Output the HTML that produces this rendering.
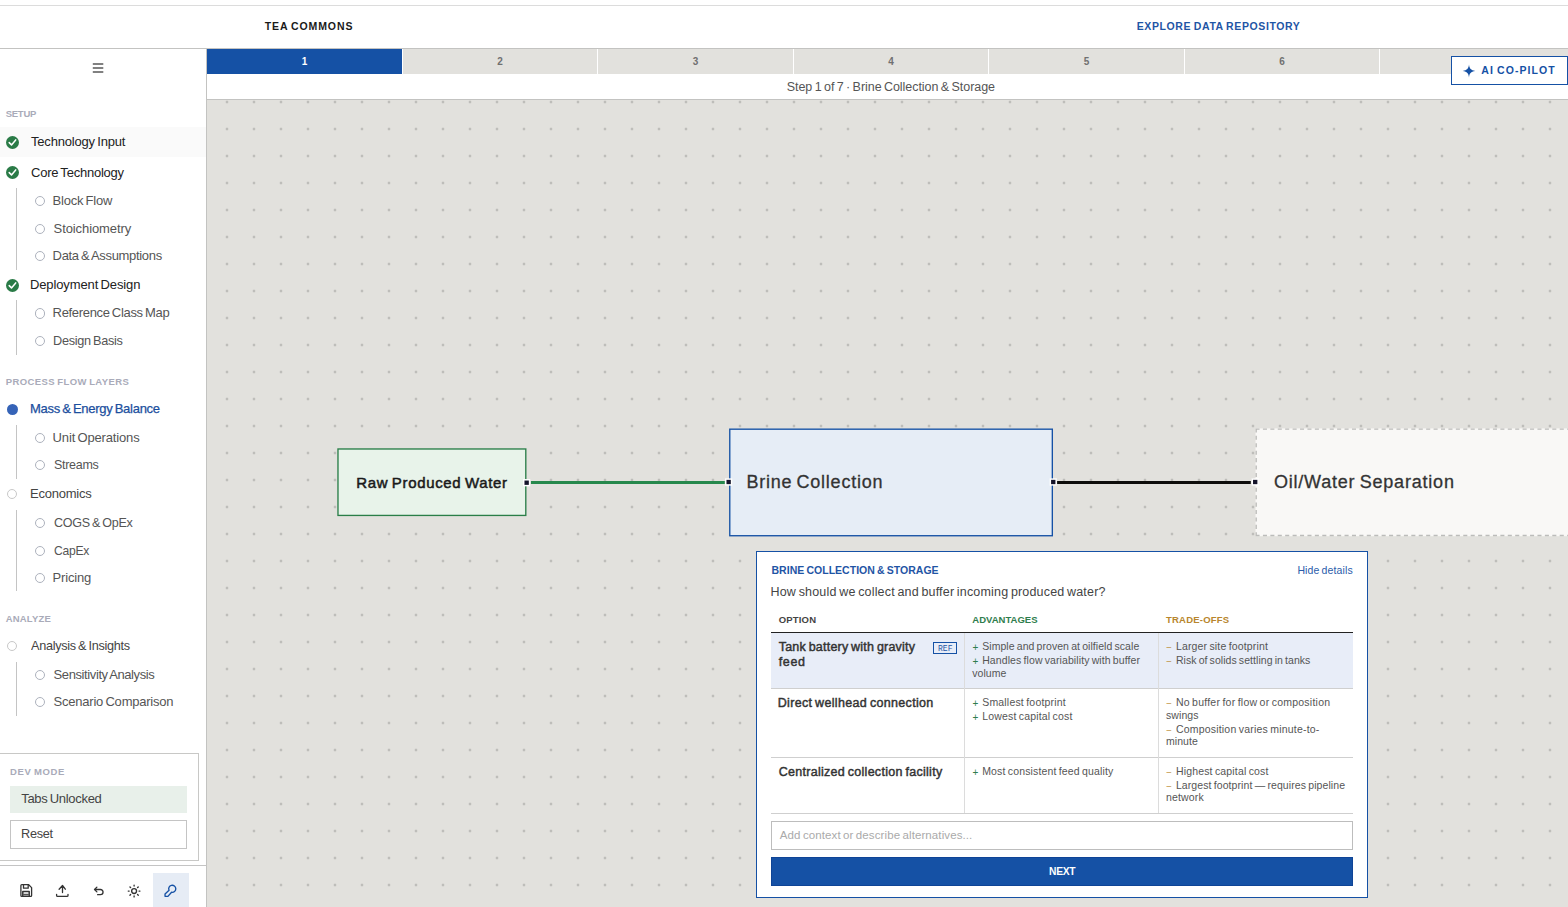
<!DOCTYPE html>
<html lang="en">
<head>
<meta charset="utf-8">
<title>TEA Commons</title>
<style>
*{box-sizing:border-box;margin:0;padding:0}
html,body{width:1568px;height:907px;overflow:hidden;background:#fff;font-family:"Liberation Sans",sans-serif}
.a{position:absolute}
.t{position:absolute;white-space:nowrap}
.ring{border:1px solid #b4b8c2;border-radius:50%;background:#fff}
#topline{left:0;top:5px;width:1568px;height:1px;background:#dcdcdc}
#hdrline{left:0;top:48px;width:1568px;height:1px;background:#c3c3c1}
#sidebar{left:0;top:49px;width:206px;height:858px;background:#fff}
#sideborder{left:206px;top:49px;width:1px;height:858px;background:#c3c3c1}
#rowhl{left:0;top:127px;width:206px;height:30px;background:#fafafa}
.tab{position:absolute;top:49px;height:25px;background:#e2e1dd;color:#707070;font:700 10px/25px "Liberation Sans",sans-serif;text-align:center}
.tab.on{background:#1551a5;color:#fff}
#strip{left:207px;top:74px;width:1361px;height:25px;background:#fff}
#stripline{left:207px;top:99px;width:1361px;height:1px;background:#c3c3c1}
#canvas{left:207px;top:100px;width:1361px;height:807px;background:#e2e1dd;overflow:hidden}
#copilot{left:1451px;top:56px;width:117px;height:29px;border:1px solid #1551a5;background:#fff}
.node{position:absolute}
#n1{left:337px;top:448px;width:190px;height:68px;border:1.35px solid #2f8a57;background:#e8f3ea}
#n2{left:729px;top:428.5px;width:324px;height:108px;border:1.35px solid #2a5caa;background:#e8edf6}
#n3{left:1256px;top:428.5px;width:324px;height:108px;border:1.35px dashed #c4c4c2;background:#f9f8f6}
.h{position:absolute;width:7px;height:7px;background:#1a192b;border:1px solid #fff}
#panel{left:756px;top:551px;width:612px;height:347px;border:1px solid #1551a5;background:#fff}
#devbox{left:-1px;top:753px;width:200px;height:108px;border:1px solid #c8c8c6}
#tabsun{left:10px;top:786px;width:177px;height:27px;background:#e8f0ea}
#reset{left:10px;top:820px;width:177px;height:29px;border:1px solid #c4c4c4;background:#fff}
#sideline{left:0;top:865px;width:206px;height:1px;background:#c4c4c4}
#keybg{left:153px;top:873px;width:36px;height:34px;background:#e6ecf5}
#thead{left:771px;top:632px;width:582px;height:1px;background:#222}
#row1{left:771px;top:633px;width:582px;height:55px;background:#e8edf8}
.hl{position:absolute;left:771px;width:582px;height:1px;background:#cfcfcf}
.vl{position:absolute;top:633px;width:1px;height:180px;background:#dcdcdc}
#ref{left:933px;top:642px;width:24px;height:12px;border:1px solid #1551a5}
#input{left:771px;top:821px;width:582px;height:29px;border:1px solid #bdbdbd;background:#fff}
#next{left:771px;top:857px;width:582px;height:29px;background:#1551a5;border:1px solid #0f4496}
</style>
</head>
<body>
<div class="a" id="topline"></div>
<div class="a" id="hdrline"></div>
<div class="a" id="sidebar"></div>
<div class="a" id="rowhl"></div>
<div class="a" id="sideborder"></div>
<div class="tab on" style="left:207px;width:195px">1</div>
<div class="tab" style="left:403px;width:194px">2</div>
<div class="tab" style="left:598px;width:195px">3</div>
<div class="tab" style="left:794px;width:194px">4</div>
<div class="tab" style="left:989px;width:195px">5</div>
<div class="tab" style="left:1185px;width:194px">6</div>
<div class="tab" style="left:1380px;width:195px">7</div>
<div class="a" id="strip"></div>
<div class="a" id="stripline"></div>
<div class="a" id="canvas">
<svg class="a" style="left:0;top:0" width="1361" height="807">
<defs><pattern id="dots" x="6.5" y="-11.5" width="27" height="27" patternUnits="userSpaceOnUse"><circle cx="13.5" cy="13.5" r="0.9" fill="#91918e"/></pattern></defs>
<rect width="1361" height="807" fill="url(#dots)"/>
</svg>
</div>
<!-- edges + nodes -->
<svg class="a" style="left:207px;top:100px" width="1361" height="807" viewBox="207 100 1361 807">
<line x1="530.9" y1="482.5" x2="724.8" y2="482.5" stroke="#26884c" stroke-width="3"/>
<line x1="1057.1" y1="482.45" x2="1250.8" y2="482.45" stroke="#0d0d0b" stroke-width="3.1"/>
<rect x="337.98" y="448.98" width="187.82" height="66.45" fill="#e8f3ea" stroke="#2a7e48" stroke-width="1.35"/>
<rect x="729.78" y="429.18" width="322.55" height="106.55" fill="#e6edf6" stroke="#1551a5" stroke-width="1.35"/>
<rect x="1255.5" y="428.4" width="324" height="107.8" fill="#f9f8f6"/>
<path d="M1255.5 429.1H1580M1256.2 428.4V536.2M1255.5 535.5H1580" fill="none" stroke="#bcbcba" stroke-width="1.35" stroke-dasharray="4.05 3.37"/>
<g fill="#14132a" stroke="#fff" stroke-width="1.45">
<rect x="523.75" y="479.8" width="5.8" height="5.8"/>
<rect x="725.75" y="479.1" width="5.8" height="5.8"/>
<rect x="1050.35" y="479.1" width="5.8" height="5.8"/>
<rect x="1252.3" y="479.1" width="5.8" height="5.8"/>
</g>
</svg>
<!-- panel -->
<div class="a" id="panel"></div>
<div class="a" id="row1"></div>
<div class="a" id="thead"></div>
<div class="hl" style="top:688px"></div>
<div class="hl" style="top:757px"></div>
<div class="hl" style="top:813px"></div>
<div class="vl" style="left:964px"></div>
<div class="vl" style="left:1158px"></div>
<div class="a" id="ref"></div>
<div class="a" id="input"></div>
<div class="a" id="next"></div>
<!-- co-pilot -->
<div class="a" id="copilot"></div>
<svg class="a" style="left:1462.4px;top:64px" width="14" height="14" viewBox="0 0 13 13"><path d="M6.5 0.5 C6.9 4.3 8.2 5.7 12.3 6.5 C8.2 7.3 6.9 8.7 6.5 12.5 C6.1 8.7 4.8 7.3 0.7 6.5 C4.8 5.7 6.1 4.3 6.5 0.5Z" fill="#1551a5"/></svg>
<!-- sidebar widgets -->
<svg class="a" style="left:92px;top:62px" width="13" height="13" viewBox="0 0 13 13"><path d="M0.8 2h10.5M0.8 6h10.5M0.8 10.05h10.5" stroke="#585858" stroke-width="1.5" fill="none"/></svg>
<div class="a" id="devbox"></div>
<div class="a" id="tabsun"></div>
<div class="a" id="reset"></div>
<div class="a" id="sideline"></div>
<div class="a" id="keybg"></div>
<svg class="a" style="left:5.8px;top:135.7px" width="13" height="13" viewBox="0 0 13 13"><circle cx="6.5" cy="6.5" r="6.5" fill="#2a7b47"/><path d="M3.2 6.6 L5.5 8.9 L9.7 3.9" fill="none" stroke="#fff" stroke-width="1.5" stroke-linecap="round" stroke-linejoin="round"/></svg>
<svg class="a" style="left:5.8px;top:166.0px" width="13" height="13" viewBox="0 0 13 13"><circle cx="6.5" cy="6.5" r="6.5" fill="#2a7b47"/><path d="M3.2 6.6 L5.5 8.9 L9.7 3.9" fill="none" stroke="#fff" stroke-width="1.5" stroke-linecap="round" stroke-linejoin="round"/></svg>
<svg class="a" style="left:5.8px;top:278.5px" width="13" height="13" viewBox="0 0 13 13"><circle cx="6.5" cy="6.5" r="6.5" fill="#2a7b47"/><path d="M3.2 6.6 L5.5 8.9 L9.7 3.9" fill="none" stroke="#fff" stroke-width="1.5" stroke-linecap="round" stroke-linejoin="round"/></svg>
<div class="a ring" style="left:35.15px;top:195.85px;width:10.3px;height:10.3px;border-color:#adb2bd"></div>
<div class="a ring" style="left:35.15px;top:223.55px;width:10.3px;height:10.3px;border-color:#adb2bd"></div>
<div class="a ring" style="left:35.15px;top:250.85px;width:10.3px;height:10.3px;border-color:#adb2bd"></div>
<div class="a ring" style="left:35.15px;top:308.35px;width:10.3px;height:10.3px;border-color:#adb2bd"></div>
<div class="a ring" style="left:35.15px;top:336.05px;width:10.3px;height:10.3px;border-color:#adb2bd"></div>
<div class="a ring" style="left:35.15px;top:432.85px;width:10.3px;height:10.3px;border-color:#adb2bd"></div>
<div class="a ring" style="left:35.15px;top:459.95px;width:10.3px;height:10.3px;border-color:#adb2bd"></div>
<div class="a ring" style="left:35.15px;top:517.75px;width:10.3px;height:10.3px;border-color:#adb2bd"></div>
<div class="a ring" style="left:35.15px;top:545.55px;width:10.3px;height:10.3px;border-color:#adb2bd"></div>
<div class="a ring" style="left:35.15px;top:572.75px;width:10.3px;height:10.3px;border-color:#adb2bd"></div>
<div class="a ring" style="left:35.15px;top:669.85px;width:10.3px;height:10.3px;border-color:#adb2bd"></div>
<div class="a ring" style="left:35.15px;top:696.85px;width:10.3px;height:10.3px;border-color:#adb2bd"></div>
<div class="a ring" style="left:7.05px;top:488.85px;width:10.3px;height:10.3px;border-color:#c8c8c8"></div>
<div class="a ring" style="left:7.05px;top:640.85px;width:10.3px;height:10.3px;border-color:#c8c8c8"></div>
<div class="a" style="left:6.8px;top:403.5px;width:11px;height:11px;border-radius:50%;background:#3563b7"></div>
<div class="a" style="left:16px;top:188.0px;width:1px;height:81.6px;background:#c4c4c4"></div>
<div class="a" style="left:16px;top:300.0px;width:1px;height:54.7px;background:#c4c4c4"></div>
<div class="a" style="left:16px;top:425.0px;width:1px;height:53.6px;background:#c4c4c4"></div>
<div class="a" style="left:16px;top:510.2px;width:1px;height:80.6px;background:#c4c4c4"></div>
<div class="a" style="left:16px;top:662.3px;width:1px;height:53.6px;background:#c4c4c4"></div>
<!-- bottom icons -->
<svg class="a" style="left:0;top:870px" width="206" height="37" viewBox="0 870 206 37" fill="none" stroke="#333" stroke-width="1.3" stroke-linecap="round" stroke-linejoin="round">
<!-- save -->
<path d="M20.9 885.6Q20.9 884.7 21.8 884.7H28.7L31.6 887.6V895.5Q31.6 896.4 30.7 896.4H21.8Q20.9 896.4 20.9 895.5Z"/>
<path d="M23.5 884.9V888.2H28.2V884.9"/>
<path d="M22.8 896.2V891.6H29.2V896.2" stroke-width="1.5"/>
<path d="M23.6 894.6H28.4" stroke-width="1.6" stroke="#555"/>
<!-- upload -->
<path d="M56.6 894.3V895.4Q56.6 896.35 57.6 896.35H67Q68 896.35 68 895.4V894.3"/>
<path d="M62.5 885.6V892.6M59.1 889.2L62.5 885.5L65.3 889.2"/>
<!-- undo -->
<path d="M96.9 887.1L94.5 889.5L96.9 891.9M94.6 889.5H100.45A2.6 2.6 0 0 1 100.45 894.7H97.6"/>
<!-- sun -->
<circle cx="134.1" cy="891.05" r="2.45" stroke-width="1.35"/>
<path d="M134.1 885.2v0.9M134.1 896v0.9M128.25 891.05h0.9M139.05 891.05h0.9M129.95 886.9l0.65 0.65M137.6 894.55l0.65 0.65M129.95 895.2l0.65-0.65M137.6 887.55l0.65-0.65" stroke-width="1.35"/>
<!-- key -->
<path d="M169.06 890.36L165.05 894.1V896.35H167.9L171.57 892.28A3.55 3.55 0 1 0 169.06 890.36Z" stroke="#1551a5" stroke-width="1.35"/>
</svg>
<div class="t" style="left:264.70px;top:20px;font:700 10.5px/12px 'Liberation Sans',sans-serif;color:#1a1a1a;letter-spacing:0.903px;word-spacing:-0.84px;">TEA COMMONS</div>
<div class="t" style="left:1136.70px;top:20px;font:700 10.5px/12px 'Liberation Sans',sans-serif;color:#1f55a5;letter-spacing:0.605px;word-spacing:-0.84px;">EXPLORE DATA REPOSITORY</div>
<div class="t" style="left:786.70px;top:80px;font:400 12.5px/14px 'Liberation Sans',sans-serif;color:#555;letter-spacing:-0.047px;word-spacing:-1.00px;">Step 1 of 7 · Brine Collection &amp; Storage</div>
<div class="t" style="left:1481.30px;top:64px;font:700 10.5px/12px 'Liberation Sans',sans-serif;color:#1551a5;letter-spacing:1.057px;word-spacing:-0.84px;">AI CO-PILOT</div>
<div class="t" style="left:5.70px;top:108px;font:700 9.5px/11px 'Liberation Sans',sans-serif;color:#a9abb9;letter-spacing:-0.259px;word-spacing:0.00px;">SETUP</div>
<div class="t" style="left:31.00px;top:134px;font:400 13px/15px 'Liberation Sans',sans-serif;color:#222;letter-spacing:-0.189px;word-spacing:-1.04px;">Technology Input</div>
<div class="t" style="left:31.00px;top:165px;font:400 13px/15px 'Liberation Sans',sans-serif;color:#222;letter-spacing:-0.230px;word-spacing:-1.04px;">Core Technology</div>
<div class="t" style="left:52.60px;top:193px;font:400 13px/15px 'Liberation Sans',sans-serif;color:#555;letter-spacing:-0.224px;word-spacing:-1.04px;">Block Flow</div>
<div class="t" style="left:53.60px;top:221px;font:400 13px/15px 'Liberation Sans',sans-serif;color:#555;letter-spacing:-0.096px;word-spacing:0.00px;">Stoichiometry</div>
<div class="t" style="left:52.60px;top:248px;font:400 13px/15px 'Liberation Sans',sans-serif;color:#555;letter-spacing:-0.317px;word-spacing:-1.04px;">Data &amp; Assumptions</div>
<div class="t" style="left:30.00px;top:277px;font:400 13px/15px 'Liberation Sans',sans-serif;color:#222;letter-spacing:-0.123px;word-spacing:-1.04px;">Deployment Design</div>
<div class="t" style="left:52.60px;top:305px;font:400 13px/15px 'Liberation Sans',sans-serif;color:#555;letter-spacing:-0.327px;word-spacing:-1.04px;">Reference Class Map</div>
<div class="t" style="left:52.62px;top:333px;font:400 13px/15px 'Liberation Sans',sans-serif;color:#555;letter-spacing:-0.300px;word-spacing:-1.04px;transform:scaleX(0.9771);transform-origin:0 0;">Design Basis</div>
<div class="t" style="left:5.70px;top:376px;font:700 9.5px/11px 'Liberation Sans',sans-serif;color:#a9abb9;letter-spacing:0.405px;word-spacing:-0.76px;">PROCESS FLOW LAYERS</div>
<div class="t" style="left:30.00px;top:401px;font:400 13px/15px 'Liberation Sans',sans-serif;color:#1c4f9e;letter-spacing:-0.279px;word-spacing:-1.04px;-webkit-text-stroke:0.25px #1c4f9e;">Mass &amp; Energy Balance</div>
<div class="t" style="left:52.60px;top:430px;font:400 13px/15px 'Liberation Sans',sans-serif;color:#555;letter-spacing:-0.156px;word-spacing:-1.04px;">Unit Operations</div>
<div class="t" style="left:53.60px;top:457px;font:400 13px/15px 'Liberation Sans',sans-serif;color:#555;letter-spacing:-0.300px;word-spacing:0.00px;transform:scaleX(0.9596);transform-origin:0 0;">Streams</div>
<div class="t" style="left:30.00px;top:486px;font:400 13px/15px 'Liberation Sans',sans-serif;color:#444;letter-spacing:-0.222px;word-spacing:0.00px;">Economics</div>
<div class="t" style="left:53.60px;top:515px;font:400 13px/15px 'Liberation Sans',sans-serif;color:#555;letter-spacing:-0.300px;word-spacing:-1.04px;transform:scaleX(0.9646);transform-origin:0 0;">COGS &amp; OpEx</div>
<div class="t" style="left:53.60px;top:543px;font:400 13px/15px 'Liberation Sans',sans-serif;color:#555;letter-spacing:-0.300px;word-spacing:0.00px;transform:scaleX(0.9317);transform-origin:0 0;">CapEx</div>
<div class="t" style="left:52.60px;top:570px;font:400 13px/15px 'Liberation Sans',sans-serif;color:#555;letter-spacing:-0.168px;word-spacing:0.00px;">Pricing</div>
<div class="t" style="left:5.70px;top:613px;font:700 9.5px/11px 'Liberation Sans',sans-serif;color:#a9abb9;letter-spacing:0.191px;word-spacing:0.00px;">ANALYZE</div>
<div class="t" style="left:31.00px;top:638px;font:400 13px/15px 'Liberation Sans',sans-serif;color:#444;letter-spacing:-0.300px;word-spacing:-1.04px;transform:scaleX(0.9743);transform-origin:0 0;">Analysis &amp; Insights</div>
<div class="t" style="left:53.60px;top:667px;font:400 13px/15px 'Liberation Sans',sans-serif;color:#555;letter-spacing:-0.400px;word-spacing:-1.04px;">Sensitivity Analysis</div>
<div class="t" style="left:53.60px;top:694px;font:400 13px/15px 'Liberation Sans',sans-serif;color:#555;letter-spacing:-0.224px;word-spacing:-1.04px;">Scenario Comparison</div>
<div class="t" style="left:10.10px;top:766px;font:700 9.5px/11px 'Liberation Sans',sans-serif;color:#a9abb9;letter-spacing:0.618px;word-spacing:-0.76px;">DEV MODE</div>
<div class="t" style="left:21.20px;top:791px;font:400 13px/15px 'Liberation Sans',sans-serif;color:#444;letter-spacing:-0.300px;word-spacing:-1.04px;">Tabs Unlocked</div>
<div class="t" style="left:21.02px;top:826px;font:400 13px/15px 'Liberation Sans',sans-serif;color:#444;letter-spacing:-0.300px;word-spacing:0.00px;transform:scaleX(0.9767);transform-origin:0 0;">Reset</div>
<div class="t" style="left:356.20px;top:474px;font:400 15px/17px 'Liberation Sans',sans-serif;color:#1a1a1a;letter-spacing:0.664px;word-spacing:-1.20px;-webkit-text-stroke:0.5px #1a1a1a;">Raw Produced Water</div>
<div class="t" style="left:746.50px;top:472px;font:400 18px/20px 'Liberation Sans',sans-serif;color:#333;letter-spacing:0.753px;word-spacing:-1.44px;-webkit-text-stroke:0.3px #333;">Brine Collection</div>
<div class="t" style="left:1273.90px;top:472px;font:400 18px/20px 'Liberation Sans',sans-serif;color:#333;letter-spacing:0.792px;word-spacing:-1.44px;-webkit-text-stroke:0.3px #333;">Oil/Water Separation</div>
<div class="t" style="left:771.50px;top:564px;font:700 10.5px/12px 'Liberation Sans',sans-serif;color:#1f55a5;letter-spacing:0.026px;word-spacing:-0.84px;">BRINE COLLECTION &amp; STORAGE</div>
<div class="t" style="left:1297.40px;top:564px;font:400 10.5px/12px 'Liberation Sans',sans-serif;color:#2a5caa;letter-spacing:0.111px;word-spacing:-0.84px;">Hide details</div>
<div class="t" style="left:770.50px;top:585px;font:400 12.5px/14px 'Liberation Sans',sans-serif;color:#444;letter-spacing:0.172px;word-spacing:-1.00px;">How should we collect and buffer incoming produced water?</div>
<div class="t" style="left:778.70px;top:614px;font:700 9.5px/11px 'Liberation Sans',sans-serif;color:#444;letter-spacing:0.188px;word-spacing:0.00px;">OPTION</div>
<div class="t" style="left:972.30px;top:614px;font:700 9.5px/11px 'Liberation Sans',sans-serif;color:#2f7d4d;letter-spacing:0.016px;word-spacing:0.00px;">ADVANTAGES</div>
<div class="t" style="left:1166.00px;top:614px;font:700 9.5px/11px 'Liberation Sans',sans-serif;color:#b8862d;letter-spacing:0.213px;word-spacing:0.00px;">TRADE-OFFS</div>
<div class="t" style="left:1048.60px;top:865px;font:700 10.5px/12px 'Liberation Sans',sans-serif;color:#fff;letter-spacing:-0.300px;word-spacing:0.00px;transform:scaleX(0.9787);transform-origin:0 0;">NEXT</div>
<div class="t" style="left:779.80px;top:829px;font:400 11.5px/12px 'Liberation Sans',sans-serif;color:#aaa;letter-spacing:0.099px;word-spacing:-0.92px;">Add context or describe alternatives...</div>
<div class="t" style="left:938.10px;top:644px;font:400 9px/10px 'Liberation Mono',sans-serif;color:#1f55a5;letter-spacing:0.000px;word-spacing:0.00px;transform:scaleX(0.892);transform-origin:0 0;">REF</div>
<div class="t" style="left:778.70px;top:640px;font:400 12.5px/14px 'Liberation Sans',sans-serif;color:#333;letter-spacing:0.219px;word-spacing:-1.00px;-webkit-text-stroke:0.45px #333;">Tank battery with gravity</div>
<div class="t" style="left:778.70px;top:655px;font:400 12.5px/14px 'Liberation Sans',sans-serif;color:#333;letter-spacing:0.641px;word-spacing:0.00px;-webkit-text-stroke:0.45px #333;">feed</div>
<div class="t" style="left:777.70px;top:696px;font:400 12.5px/14px 'Liberation Sans',sans-serif;color:#333;letter-spacing:0.330px;word-spacing:-1.00px;-webkit-text-stroke:0.45px #333;">Direct wellhead connection</div>
<div class="t" style="left:778.70px;top:765px;font:400 12.5px/14px 'Liberation Sans',sans-serif;color:#333;letter-spacing:0.281px;word-spacing:-1.00px;-webkit-text-stroke:0.45px #333;">Centralized collection facility</div>
<div class="t" style="left:972.40px;top:642px;font:400 10px/11px 'Liberation Sans',sans-serif;color:#2f7d4d;letter-spacing:0.000px;word-spacing:0.00px;">+</div>
<div class="t" style="left:982.20px;top:640px;font:400 10.5px/12px 'Liberation Sans',sans-serif;color:#555;letter-spacing:0.056px;word-spacing:-0.84px;">Simple and proven at oilfield scale</div>
<div class="t" style="left:972.40px;top:656px;font:400 10px/11px 'Liberation Sans',sans-serif;color:#2f7d4d;letter-spacing:0.000px;word-spacing:0.00px;">+</div>
<div class="t" style="left:982.20px;top:654px;font:400 10.5px/12px 'Liberation Sans',sans-serif;color:#555;letter-spacing:0.091px;word-spacing:-0.84px;">Handles flow variability with buffer</div>
<div class="t" style="left:972.30px;top:667px;font:400 10.5px/12px 'Liberation Sans',sans-serif;color:#555;letter-spacing:0.038px;word-spacing:0.00px;">volume</div>
<div class="t" style="left:1166.40px;top:642px;font:400 8.5px/10px 'Liberation Sans',sans-serif;color:#b8862d;letter-spacing:0.000px;word-spacing:0.00px;">–</div>
<div class="t" style="left:1175.90px;top:640px;font:400 10.5px/12px 'Liberation Sans',sans-serif;color:#555;letter-spacing:0.162px;word-spacing:-0.84px;">Larger site footprint</div>
<div class="t" style="left:1166.40px;top:656px;font:400 8.5px/10px 'Liberation Sans',sans-serif;color:#b8862d;letter-spacing:0.000px;word-spacing:0.00px;">–</div>
<div class="t" style="left:1175.90px;top:654px;font:400 10.5px/12px 'Liberation Sans',sans-serif;color:#555;letter-spacing:0.049px;word-spacing:-0.84px;">Risk of solids settling in tanks</div>
<div class="t" style="left:972.40px;top:698px;font:400 10px/11px 'Liberation Sans',sans-serif;color:#2f7d4d;letter-spacing:0.000px;word-spacing:0.00px;">+</div>
<div class="t" style="left:982.20px;top:696px;font:400 10.5px/12px 'Liberation Sans',sans-serif;color:#555;letter-spacing:0.191px;word-spacing:-0.84px;">Smallest footprint</div>
<div class="t" style="left:972.40px;top:712px;font:400 10px/11px 'Liberation Sans',sans-serif;color:#2f7d4d;letter-spacing:0.000px;word-spacing:0.00px;">+</div>
<div class="t" style="left:982.20px;top:710px;font:400 10.5px/12px 'Liberation Sans',sans-serif;color:#555;letter-spacing:0.171px;word-spacing:-0.84px;">Lowest capital cost</div>
<div class="t" style="left:1166.40px;top:698px;font:400 8.5px/10px 'Liberation Sans',sans-serif;color:#b8862d;letter-spacing:0.000px;word-spacing:0.00px;">–</div>
<div class="t" style="left:1175.90px;top:696px;font:400 10.5px/12px 'Liberation Sans',sans-serif;color:#555;letter-spacing:0.231px;word-spacing:-0.84px;">No buffer for flow or composition</div>
<div class="t" style="left:1166.00px;top:709px;font:400 10.5px/12px 'Liberation Sans',sans-serif;color:#555;letter-spacing:0.071px;word-spacing:0.00px;">swings</div>
<div class="t" style="left:1166.40px;top:725px;font:400 8.5px/10px 'Liberation Sans',sans-serif;color:#b8862d;letter-spacing:0.000px;word-spacing:0.00px;">–</div>
<div class="t" style="left:1175.90px;top:723px;font:400 10.5px/12px 'Liberation Sans',sans-serif;color:#555;letter-spacing:0.200px;word-spacing:-0.84px;">Composition varies minute-to-</div>
<div class="t" style="left:1166.00px;top:735px;font:400 10.5px/12px 'Liberation Sans',sans-serif;color:#555;letter-spacing:0.065px;word-spacing:0.00px;">minute</div>
<div class="t" style="left:972.40px;top:767px;font:400 10px/11px 'Liberation Sans',sans-serif;color:#2f7d4d;letter-spacing:0.000px;word-spacing:0.00px;">+</div>
<div class="t" style="left:982.20px;top:765px;font:400 10.5px/12px 'Liberation Sans',sans-serif;color:#555;letter-spacing:0.148px;word-spacing:-0.84px;">Most consistent feed quality</div>
<div class="t" style="left:1166.40px;top:767px;font:400 8.5px/10px 'Liberation Sans',sans-serif;color:#b8862d;letter-spacing:0.000px;word-spacing:0.00px;">–</div>
<div class="t" style="left:1175.90px;top:765px;font:400 10.5px/12px 'Liberation Sans',sans-serif;color:#555;letter-spacing:0.166px;word-spacing:-0.84px;">Highest capital cost</div>
<div class="t" style="left:1166.40px;top:781px;font:400 8.5px/10px 'Liberation Sans',sans-serif;color:#b8862d;letter-spacing:0.000px;word-spacing:0.00px;">–</div>
<div class="t" style="left:1175.90px;top:779px;font:400 10.5px/12px 'Liberation Sans',sans-serif;color:#555;letter-spacing:0.090px;word-spacing:-0.84px;">Largest footprint — requires pipeline</div>
<div class="t" style="left:1166.00px;top:791px;font:400 10.5px/12px 'Liberation Sans',sans-serif;color:#555;letter-spacing:0.164px;word-spacing:0.00px;">network</div>
</body>
</html>
